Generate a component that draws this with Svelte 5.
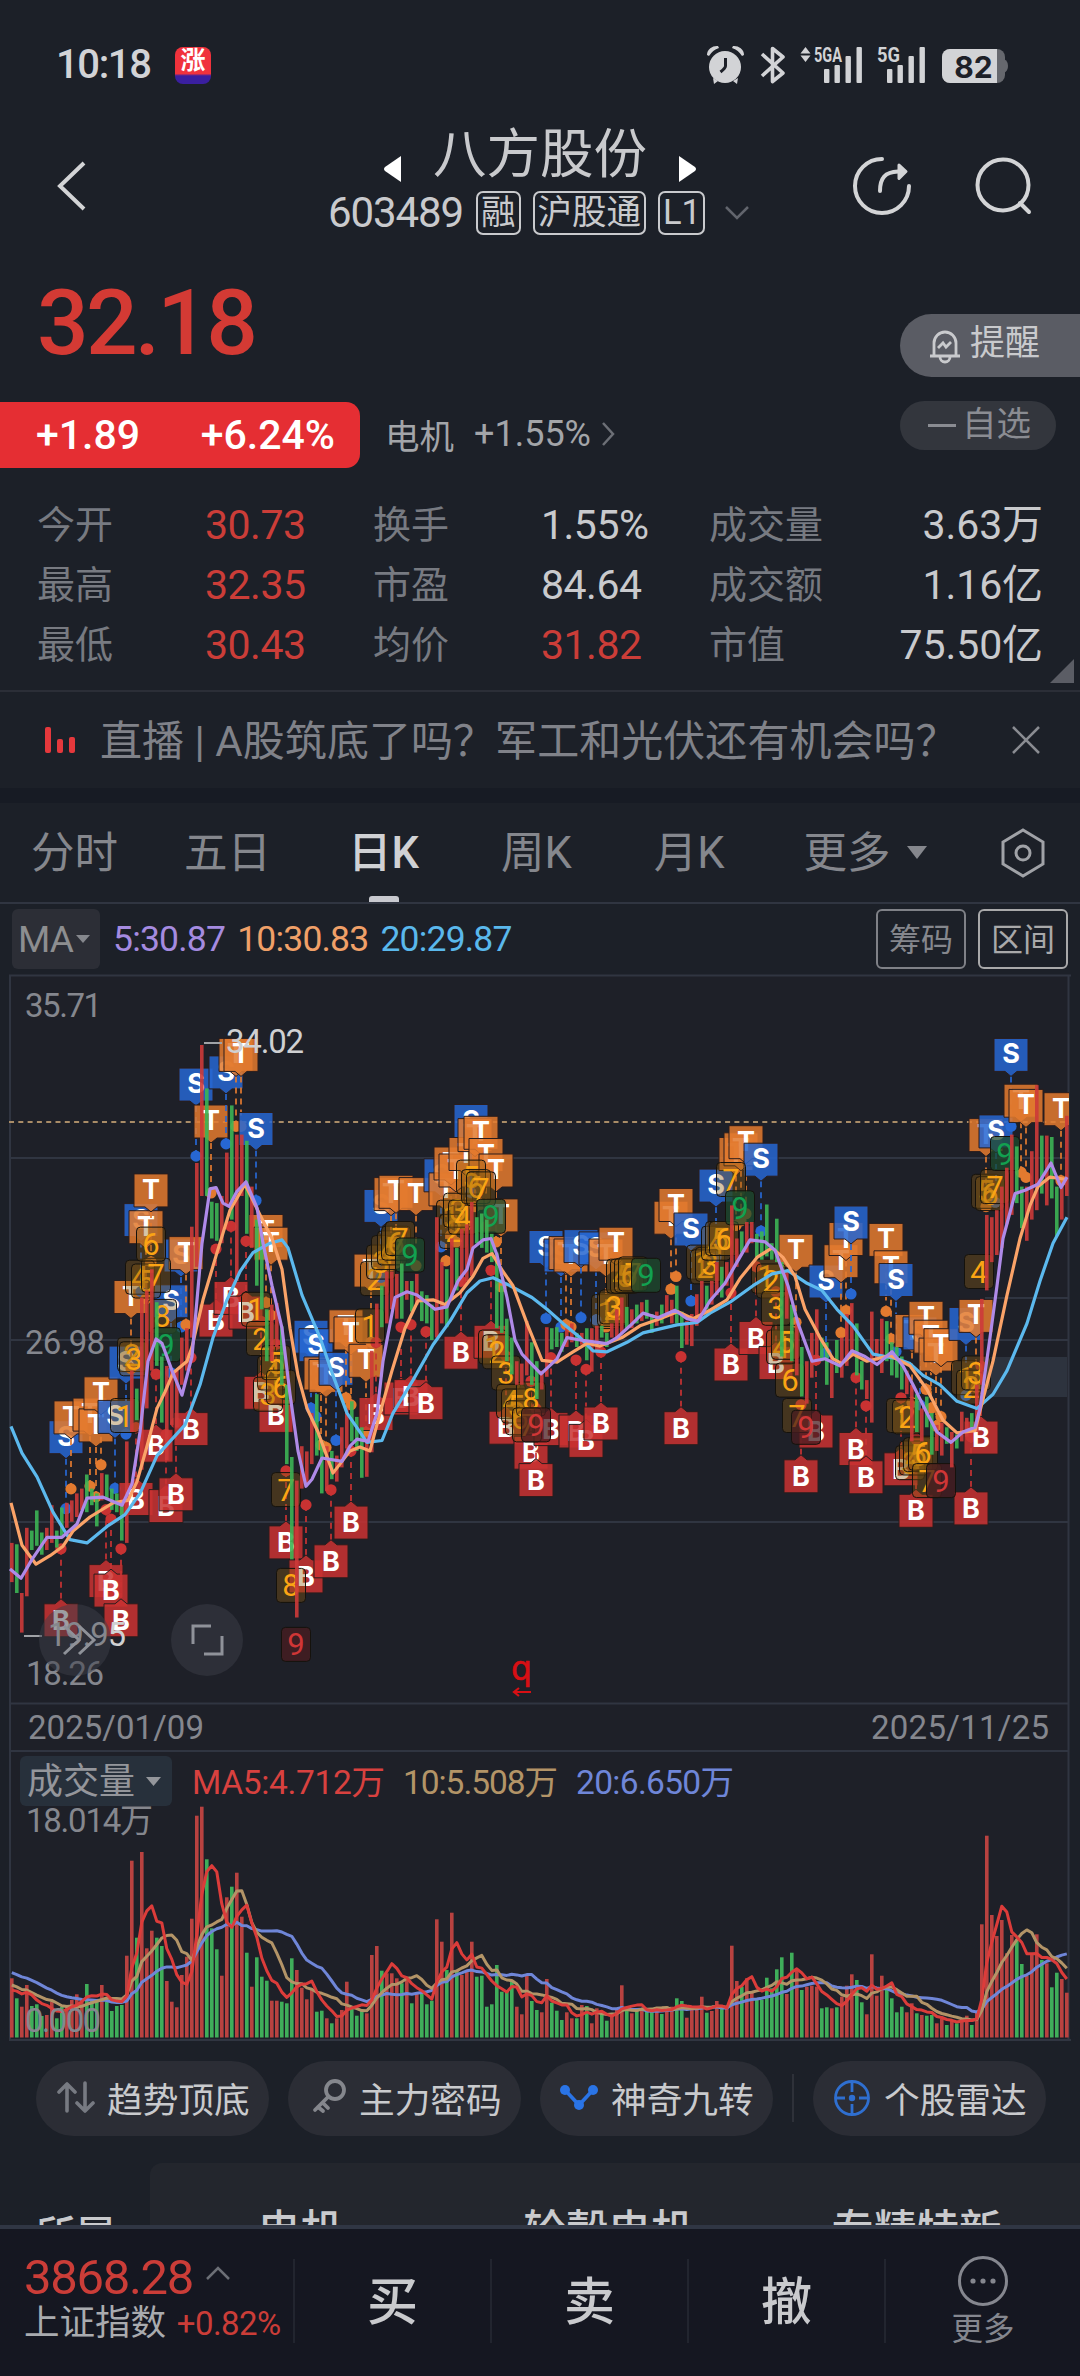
<script lang="ts">
const stats = [
  { label: '今开', value: '30.73', up: true },
  { label: '换手', value: '1.55%', up: false },
  { label: '成交量', value: '3.63万', up: false },
  { label: '最高', value: '32.35', up: true },
  { label: '市盈', value: '84.64', up: false },
  { label: '成交额', value: '1.16亿', up: false },
  { label: '最低', value: '30.43', up: true },
  { label: '均价', value: '31.82', up: true },
  { label: '市值', value: '75.50亿', up: false }
];

const tabs = ['分时', '五日', '日K', '周K', '月K', '更多'];
let active = '日K';

// r = up day, g = down day, then high,low on the price scale
const rawCandles = `r1235,1318 g1238,1341 r1341,1425 r1203,1348 g1209,1250 g1166,1241 g1213,1260 r1203,1250 r1155,1235 g1209,1245
g1160,1220 r1150,1203 r1145,1190 r1130,1180 r1120,1165 g1090,1170 g1120,1155 g1130,1200 r1087,1145 g1090,1140
g1120,1165 g1130,1170 g1150,1230 r1020,1235 r870,1000 g908,975 r715,1080 r700,950 r655,870 g725,860
g840,980 r860,1060 r870,985 r870,990 r800,900 r780,870 r565,800 r430,650 r180,500 g272,500
g512,590 g515,595 r500,600 r408,520 g308,550 r370,680 r370,500 g383,580 r480,610 g550,690
g580,740 g740,850 r730,850 r727,820 g776,900 g900,1068 g1053,1270 r1103,1393 r1030,1120 r1041,1110
r960,1068 g920,1050 g1020,1130 r1030,1125 g1040,1100 r1050,1105 r990,1075 r950,1035 g935,1020 g968,1040
g990,1097 r1010,1095 r828,1043 r728,820 g690,778 r660,770 r660,740 r665,760 g643,760 r680,720
g680,745 r665,730 g702,765 g710,770 g730,805 r545,800 r640,770 g655,778 r590,720 g610,700
r570,690 r560,680 r513,670 g545,600 g537,610 g550,620 g580,640 g620,780 g690,790 g760,850
g800,878 r850,900 r855,900 r765,880 g810,900 g850,930 r870,910 r778,883 g780,825 g778,820
g790,830 r780,820 r770,810 g790,820 r790,815 g780,848 r780,872 r775,830 g775,800 g790,820
r770,800 r740,800 r715,790 g735,780 r740,780 g730,770 r725,765 g720,760 g750,790 r745,775
g730,770 r710,750 r720,770 g690,770 g745,822 r765,815 r750,818 r708,775 r680,750 g690,740
r680,730 r640,710 g650,715 r640,690 r520,700 r590,650 g575,620 r555,620 r555,600 g580,630
g575,635 g518,628 g600,635 g548,640 g640,840 r660,760 g730,850 r770,880 g820,925 r850,940
r790,885 r740,850 g800,850 g810,900 r840,928 g805,875 r800,885 r750,860 r727,840 g770,880
g850,910 r890,930 r745,980 r803,850 r760,875 g765,850 g810,880 g820,885 g840,910 r870,920
r900,1020 g920,1000 r950,1020 g925,990 g960,1048 r985,1040 r980,1050 g990,1025 r1000,1075 g1005,1035
r957,1020 r970,1010 g960,1000 r900,1000 r718,900 r540,700 r545,640 r530,625 r480,610 r440,560
r370,540 g395,515 g480,568 r480,595 r405,550 r265,530 g372,495 r372,520 g375,505 g480,585
r475,550 r330,500`;

const y = (v: number) => +(960 + v * 0.472).toFixed(1);
const bx = (i: number) => +(11.8 + i * 5).toFixed(1);

const candles = rawCandles.split(/\s+/).map((c, i) => {
  const [hi, lo] = c.slice(1).split(',').map(Number);
  return { x: bx(i), up: c[0] === 'r', top: y(hi), bottom: y(lo) };
});

const volumes = [
  865,925,950,885,948,943,978,975,935,985,950,950,930,913,930,882,930,935,885,935,963,948,945,797,512,743,486,775,722,743,
  768,873,935,952,855,800,686,377,350,508,715,778,857,622,590,548,680,788,890,802,860,872,932,932,935,940,805,840,893,928,
  900,965,962,985,1000,985,960,875,950,977,960,970,795,768,842,850,850,865,880,870,940,910,910,943,932,688,755,840,668,840,
  855,845,755,860,857,950,943,825,905,905,870,950,973,858,933,960,967,867,938,962,990,967,985,985,945,948,1000,955,970,992,
  975,960,886,950,970,960,955,960,965,955,972,950,950,925,933,983,960,955,920,968,963,933,955,950,767,873,890,865,905,925,
  930,863,895,838,802,912,788,842,900,890,887,890,955,952,955,952,920,887,853,870,937,973,793,917,857,900,925,967,950,967,
  940,970,975,977,975,1000,985,1005,990,1000,985,977,1005,965,703,437,675,738,690,790,735,750,822,858,790,733,810,820,892,848,
  867,908
];
const volY = (v: number) => +(1690 + v / 3).toFixed(1);

// bars before the first visible day, needed by the long averages
const earlier = [...Array(10).fill(811), ...Array(5).fill(870), ...Array(4).fill(909)];
function volumeMa(n: number) {
  const all = [...earlier, ...volumes];
  return volumes.map((_, i) => {
    const end = i + earlier.length + 1;
    const sum = all.slice(end - n, end).reduce((a, b) => a + b, 0);
    return `${bx(i)},${volY(sum / n)}`;
  }).join(' ');
}

const line = (s: string) => s.split(' ').map((p) => {
  const [x, v] = p.split(',').map(Number);
  return `${x},${y(v)}`;
}).join(' ');

const ma5 = line('10,1290 21,1310 32,1270 47,1223 62,1223 77,1195 87,1140 103,1138 122,1155 132,1110 140,1000 148,850 156,803 162,812 172,870 182,922 192,840 202,600 210,485 216,482 223,515 229,522 237,490 246,470 257,525 263,600 272,690 282,780 290,920 298,1040 306,1115 312,1100 322,1055 342,1062 350,1030 357,1015 368,1020 377,960 383,850 395,715 407,703 417,710 435,740 447,735 458,680 467,655 473,610 483,593 491,590 497,625 507,715 515,805 522,835 541,877 557,845 567,800 580,805 590,808 607,813 617,800 630,775 643,748 658,758 675,742 687,760 698,765 710,722 725,685 737,640 750,593 765,597 775,615 788,690 798,770 812,850 825,845 840,860 852,828 865,840 877,857 892,830 903,860 913,900 927,960 937,1000 951,1022 963,1000 975,990 980,950 990,800 997,690 1003,590 1015,495 1025,488 1038,475 1051,430 1061,482 1067,460');
const ma10 = line('11,1150 22,1240 36,1280 50,1262 63,1242 73,1210 90,1180 113,1150 128,1145 137,1105 147,1030 157,950 165,915 173,875 187,850 192,820 203,720 217,620 230,530 245,475 260,540 272,590 282,655 290,780 298,880 307,950 318,1000 333,1087 350,1040 360,1032 370,1040 380,960 392,870 405,780 418,722 433,720 445,730 460,705 473,670 483,632 492,622 503,660 513,690 527,770 542,848 557,852 573,830 587,812 600,818 622,800 640,775 660,760 678,745 693,760 710,742 727,720 740,675 757,630 772,610 783,630 795,670 805,740 820,800 833,845 842,855 853,835 867,850 890,838 910,860 927,910 943,975 957,1002 975,997 983,930 993,850 1007,710 1020,590 1030,520 1038,480 1050,460 1067,465');
const ma20 = line('11,988 22,1045 37,1095 53,1170 70,1228 87,1235 107,1200 125,1175 140,1130 157,1050 185,985 200,900 213,800 227,720 240,660 253,620 270,600 282,593 288,610 302,710 320,800 333,880 347,960 367,1022 382,1018 393,960 413,890 433,815 450,765 467,705 480,680 493,673 508,688 532,715 547,740 563,770 580,800 593,828 607,830 627,810 643,790 677,773 697,768 710,748 730,725 753,690 772,665 788,658 807,685 822,700 837,740 853,775 873,835 897,845 910,855 923,880 940,900 957,935 977,950 993,920 1007,870 1027,770 1040,680 1053,600 1067,545');

// kind, x, badge centre
const rawSignals = `S66,1010 T71,968 T90,962 T96,985 T101,917 S115,967 S126,852 T131,713 S141,550 T146,565 T151,487 S171,722 S181,625 T186,620
S196,263 T211,341 S226,237 T236,200 T241,200 S256,357 T266,573 T271,600 B61,1400 B106,1317 B111,1337 B121,1400 B136,1143 B156,1030
B166,1158 B176,1133 B191,995 B216,765 B231,717 B246,748 B261,918 B276,967 B286,1235 B306,1307 B331,1275 B351,1193
S311,797 S316,815 T321,875 T326,880 S336,865 T346,775 T351,790 T366,848 T371,657 B376,963 B401,930 B411,925 B426,940 B461,833 B491,810
B506,992 B531,1045 B536,1103 B551,995 B576,1000 B586,1020 B601,983 B681,993 S381,520 T391,495 T396,490 T416,495
S441,455 T446,485 T451,430 T456,445 T466,410 S471,340 T475,370 T481,365 T486,412 T496,445 T501,540
S546,607 S561,625 T566,620 T571,625 S581,605 S596,610 T606,625 T616,600 T671,545 T676,518 S691,570 S716,477
T736,410 T741,400 T746,385 S761,422 T796,615 S826,680 T841,637 T846,590 S851,555 T886,592 T891,650 S896,677
T912,785 S920,790 T926,757 T931,797 T936,835 T941,815 S966,770 T976,753 T986,370 S996,362 S1011,200 T1021,297 T1026,308 T1061,315
B731,858 B756,802 B776,855 B816,1000 B801,1095 B856,1037 B866,1097 B901,1080 B916,1168 B971,1163 B981,1013`;
const signals = rawSignals.split(/\s+/).map((s) => {
  const [x, v] = s.slice(1).split(',').map(Number);
  return { kind: s[0], x, y: y(v), dir: s[0] === 'B' ? -1 : 1 };
});

// nine-turn counter: digit, x, centre; G/R is the closing nine
const rawTurns = `2@132,836 3@134,845 1@125,965 4@140,672 5@146,680 7@156,668 6@151,602 8@162,755 G@166,815
1@256,740 2@261,802 4@272,875 3@268,920 5@276,853 6@281,905 7@286,1122 8@291,1325 R@296,1450
1@370,775 2@375,675 3@381,640 4@386,620 5@392,610 6@396,600 7@400,590 G@410,625
1@451,545 2@454,575 3@458,530 4@463,545 5@471,460 6@476,480 7@481,485 G@491,543
1@493,820 2@497,830 3@506,875 4@511,935 5@516,945 6@520,970 8@531,930 7@527,985 R@536,985
1@606,745 2@612,740 3@614,735 4@621,670 5@625,670 6@629,668 7@633,665 G@646,668
1@701,640 2@705,650 3@710,645 4@716,600 5@720,590 6@724,590 7@731,465 G@740,525
1@766,670 2@771,680 3@776,738 4@781,820 5@786,810 6@790,890 7@797,965 R@806,990
1@901,965 2@907,968 3@910,1065 4@914,1055 5@918,1048 6@923,1045 7@927,1103 R@941,1103
1@966,885 2@971,905 3@976,875 4@979,660 5@986,490 6@990,495 7@995,480 G@1005,410`;
const turns = rawTurns.split(/\s+/).map((s) => {
  const [x, v] = s.slice(2).split(',').map(Number);
  const c = s[0];
  return { text: c === 'G' || c === 'R' ? '9' : c, cls: c === 'G' ? 'sell' : c === 'R' ? 'buy' : 'count', x, y: y(v) };
});
</script>

<div class="app">
  <div class="status">
    <span class="clock">10:18</span>
    <span class="app-icon"><b>涨</b></span>
    <svg class="status-icons" width="302" height="40" viewBox="706 44 302 40">
      <g fill="#d2d3d6">
        <circle cx="725" cy="66" r="16" />
        <path d="M707 54a10 9 0 0 1 11-9l1 2a19 19 0 0 0-10 8zM744 54a10 9 0 0 0-11-9l-1 2a19 19 0 0 1 10 8zM713 77l5 3-4 3zM738 77l-5 3 4 3z" />
        <path d="M805.500 46l5 6.500h-10zM805.500 61l5-6.500h-10z" />
        <rect x="824" y="68" width="5.400" height="14" rx="1" /><rect x="834.500" y="64" width="5.400" height="18" rx="1" />
        <rect x="845.500" y="55" width="5.400" height="27" rx="1" /><rect x="856.500" y="46" width="5.400" height="36" rx="1" />
        <rect x="887" y="68" width="5.400" height="14" rx="1" /><rect x="897.500" y="64" width="5.400" height="18" rx="1" />
        <rect x="908.500" y="55" width="5.400" height="27" rx="1" /><rect x="919.500" y="46" width="5.400" height="36" rx="1" />
        <rect x="942" y="48" width="63" height="34" rx="8" fill="#66686e" />
        <path d="M1004 58q4 2 4 7t-4 7z" fill="#66686e" />
        <path d="M950 48h47v34h-47a8 8 0 0 1-8-8v-18a8 8 0 0 1 8-8z" />
        <text x="814" y="61" font-size="21" font-weight="700" textLength="28" lengthAdjust="spacingAndGlyphs">5GA</text>
        <text x="877" y="61" font-size="21" font-weight="700" textLength="23" lengthAdjust="spacingAndGlyphs">5G</text>
      </g>
      <text x="973.500" y="76.500" class="batt">82</text>
      <path d="M725.500 57v8q0 2-5 6" fill="none" stroke="#1d2028" stroke-width="3" />
      <path d="M762 53l21 19-10.500 8.500v-33l10.500 8.500-21 19" fill="none" stroke="#d2d3d6" stroke-width="3.600" stroke-linejoin="round" />
    </svg>
  </div>

  <div class="nav">
    <svg class="back" width="30" height="50" viewBox="0 0 30 50"><path d="M27 2L3 25l24 23" /></svg>
    <div class="title">
      <div class="name">
        <svg width="19" height="28" viewBox="0 0 19 28"><path d="M18 1v26L2 16q-2-2 0-4z" /></svg>
        <h1>八方股份</h1>
        <svg width="19" height="28" viewBox="0 0 19 28"><path d="M1 1v26l16-11q2-2 0-4z" /></svg>
      </div>
      <div class="code">
        <span class="num">603489</span>
        <span class="tag">融</span>
        <span class="tag">沪股通</span>
        <span class="tag">L1</span>
        <svg width="26" height="14" viewBox="0 0 26 14"><path d="M2 1l11 11L24 1" /></svg>
      </div>
    </div>
    <svg class="share" width="60" height="62" viewBox="0 0 60 62">
      <path d="M30 3a27 27 0 1 0 27 27" />
      <path d="M28 35c0-13 5-19 18-19.500" />
      <path class="solid" d="M47 9l7 6.500-7 7z" />
    </svg>
    <svg class="search" width="60" height="62" viewBox="0 0 60 62"><circle cx="29" cy="29" r="25.500" /><path d="M46 47l9 9" /></svg>
  </div>

  <section class="quote">
    <div class="top">
      <span class="price">32.18</span>
      <button class="remind">
        <svg width="34" height="36" viewBox="0 0 34 36"><path d="M6 28V15a11 11 0 0 1 22 0v13M2 28h30M12 29a5 5 0 0 0 10 0M10 20l5-5 3 4 5-5" /></svg>
        <span>提醒</span>
      </button>
    </div>
    <div class="change">
      <span class="badge"><span>+1.89</span><span>+6.24%</span></span>
      <span class="sector">电机 <em>+1.55%</em>
        <svg width="16" height="26" viewBox="0 0 16 26"><path d="M2 2l10 11L2 24" /></svg>
      </span>
      <button class="watch"><i></i><span>自选</span></button>
    </div>
    <div class="stats">
      {#each stats as s}
        <span class="label">{s.label}</span>
        <span class="value" class:up={s.up}>{s.value}</span>
      {/each}
    </div>
    <span class="corner"></span>
  </section>

  <div class="banner">
    <span class="live"><i></i><i></i><i></i></span>
    <span class="msg">直播 | A股筑底了吗？军工和光伏还有机会吗？</span>
    <svg width="30" height="30" viewBox="0 0 30 30"><path d="M2 2l26 26M28 2L2 28" /></svg>
  </div>

  <nav class="tabs">
    {#each tabs as t}
      <button class:active={t === active} on:click={() => (active = t)}>{t}</button>
    {/each}
    <i class="caret"></i>
    <svg width="46" height="50" viewBox="0 0 46 50"><path d="M23 2l20 12v22L23 48 3 36V14z" /><circle cx="23" cy="25" r="7" /></svg>
  </nav>

  <div class="ma-row">
    <span class="ma-select">MA<i class="caret"></i></span>
    <span class="m5">5:30.87</span>
    <span class="m10">10:30.83</span>
    <span class="m20">20:29.87</span>
    <button class="first">筹码</button>
    <button class="on">区间</button>
  </div>

  <svg class="chart" width="1080" height="1068" viewBox="0 974 1080 1068">
    <defs>
      <clipPath id="plot"><rect x="9" y="975" width="1060" height="1066" /></clipPath>
    </defs>
    <rect x="10" y="976" width="1058" height="1064" fill="#1e2028" />
    <rect x="983" y="1357" width="84" height="40" fill="#2d333e" />
    <g class="grid">
      <path d="M10 1158H1068M10 1340H1068M10 1522H1068M10 1703.500H1068M985 1298H1068" />
      <path d="M9 975.500H1071M10 1751H1068M10 976V2040M1068.500 976V2040" stroke-width="2.400" />
      <path d="M9 2040H1071" stroke-width="4" />
    </g>
    <path class="last" d="M9 1122H1068" />
    <g class="axis">
      <text x="25" y="1017" textLength="77">35.71</text>
      <text x="25" y="1354" textLength="80">26.98</text>
      <text x="26" y="1685" textLength="78">18.26</text>
    </g>

    <g clip-path="url(#plot)">
      {#each signals as s}
        <g class="sig {s.kind}">
          <path class="stalk" d="M{s.x} {s.y + s.dir * 22}V{s.y + s.dir * 70}" />
          <circle cx={s.x} cy={s.y + s.dir * 72} r="5.600" />
          <path class="box" d="M{s.x - 17} {s.y - s.dir * 16}h34v{s.dir * 33}h-11l-6 {s.dir * 5}l-6 {s.dir * -5}h-11z" />
          <text x={s.x} y={s.y + 9}>{s.kind}</text>
        </g>
      {/each}
      {#each turns as t}
        <g class="turn {t.cls}">
          <rect x={t.x - 14.5} y={t.y - 17} width="29" height="34" rx="4" />
          <text x={t.x} y={t.y + 11}>{t.text}</text>
        </g>
      {/each}
      {#each candles as c}
        <path class={c.up ? 'rise' : 'fall'} d="M{c.x} {c.top}V{c.bottom}" />
      {/each}
      <polyline class="ma" stroke="#5cb9ee" points={ma20} />
      <polyline class="ma" stroke="#fba368" points={ma10} />
      <polyline class="ma" stroke="#af8ae8" points={ma5} />
    </g>

    <path d="M204 1043h18M24 1636h18" stroke="#a0a2a6" stroke-width="2" />
    <g class="axis extreme">
      <text x="226" y="1053" textLength="78">34.02</text>
      <text x="48" y="1646" textLength="78">19.95</text>
    </g>

    <circle cx="75" cy="1640" r="36" class="fab" />
    <circle cx="207" cy="1640" r="36" class="fab" />
    <path class="fab-icon" d="M64 1626l15 14-15 14M79 1626l15 14-15 14M193 1644v-18h18M204 1654h18v-18" />
    <text x="521.500" y="1680" class="q">q</text>
    <path d="M531 1692h-17m5-4l-5 4 5 4" fill="none" stroke="#d80f14" stroke-width="2.200" />

    <g class="date">
      <text x="28" y="1739" textLength="176">2025/01/09</text>
      <text x="871" y="1739" textLength="178">2025/11/25</text>
    </g>

    {#each volumes as v, i}
      <path class={candles[i].up ? 'vrise' : 'vfall'} d="M{bx(i)} {volY(v)}V2037.500" />
    {/each}
    <polyline class="vma" stroke="#6f86d8" points={volumeMa(20)} />
    <polyline class="vma" stroke="#b39467" points={volumeMa(10)} />
    <polyline class="vma" stroke="#dc3c3a" points={volumeMa(5)} />

    <rect x="20" y="1756" width="152" height="50" rx="6" fill="#27303b" />
    <text x="27" y="1794" font-size="36" fill="#94969b">成交量</text>
    <path d="M146 1777h15l-7.500 9z" fill="#94969b" />
    <g class="vol-legend">
      <text x="192" y="1794" textLength="193" fill="#d8413f">MA5:4.712万</text>
      <text x="403" y="1794" textLength="155" fill="#b39467">10:5.508万</text>
      <text x="576" y="1794" textLength="158" fill="#6f86d8">20:6.650万</text>
    </g>
    <g class="axis">
      <text x="26" y="1832" textLength="127">18.014万</text>
      <text x="25" y="2032" textLength="76">0.000</text>
    </g>
  </svg>

  <div class="tools">
    <button>
      <svg width="40" height="40" viewBox="0 0 40 40"><g stroke="#777a82" stroke-width="3.600" stroke-linecap="round" stroke-linejoin="round"><path d="M12 33V6M4 14l8-8 8 8M30 5v27M22 25l8 8 8-8" /></g></svg>
      趋势顶底
    </button>
    <button>
      <svg width="40" height="40" viewBox="0 0 40 40"><g stroke="#85878d" stroke-width="3.800" stroke-linecap="round"><circle cx="28" cy="12" r="9" /><path d="M21 19L8 32M16 25l5 5M11 29l5 4" /></g></svg>
      主力密码
    </button>
    <button>
      <svg width="40" height="40" viewBox="0 0 40 40"><g stroke="#2a74e6" stroke-width="3.600"><path d="M6 12l14 15 14-15" /></g><g fill="#2a74e6"><circle cx="6" cy="12" r="5" /><circle cx="20" cy="27" r="5" /><circle cx="34" cy="12" r="5" /></g></svg>
      神奇九转
    </button>
    <i class="sep"></i>
    <button>
      <svg width="40" height="40" viewBox="0 0 40 40"><g stroke="#2f6fd0" stroke-width="2.800"><circle cx="20" cy="20" r="16.500" /><path d="M20 3v11M20 26v11M3 20h10M27 20h10" /></g><circle cx="20" cy="20" r="3.200" fill="#2f6fd0" /></svg>
      个股雷达
    </button>
  </div>

  <div class="belong">
    <span class="own">所属</span>
    <div class="list"><span>电机</span><span>轮毂电机</span><span>专精特新</span></div>
  </div>

  <footer>
    <div class="index">
      <div class="point">3868.28 <svg width="26" height="16" viewBox="0 0 26 16"><path d="M2 14L13 3l11 11" /></svg></div>
      <div class="idx">上证指数 <em>+0.82%</em></div>
    </div>
    <button>买</button>
    <button>卖</button>
    <button>撤</button>
    <div class="more">
      <svg width="52" height="52" viewBox="0 0 52 52"><circle cx="26" cy="26" r="23.500" /><g class="dots"><circle cx="16" cy="26" r="2.600" /><circle cx="26" cy="26" r="2.600" /><circle cx="36" cy="26" r="2.600" /></g></svg>
      更多
    </div>
  </footer>
</div>

<style>
:global(body) {
  background: #1d2028;
}
.app {
  width: 1080px;
  height: 2376px;
  overflow: hidden;
  display: flex;
  flex-direction: column;
  background: #1c2028;
  color: #c9cacd;
  font-family: Roboto, "Noto Sans CJK SC", sans-serif;
}
.app > * {
  flex: none;
  box-sizing: border-box;
}
button {
  padding: 0;
  border: 0;
  background: none;
  color: inherit;
  font: inherit;
}
i, em {
  font-style: normal;
}
svg {
  display: block;
  fill: none;
}
.caret {
  width: 0;
  border: 10px solid transparent;
  border-top: 13px solid #85878d;
  border-bottom: 0;
}

.status {
  height: 125px;
  display: flex;
  align-items: center;
  padding: 4px 72px 0 56px;
}
.clock {
  width: 94px;
  font-size: 40px;
  font-weight: 500;
  letter-spacing: -1.4px;
  color: #d2d3d6;
}
.app-icon {
  width: 36px;
  height: 37px;
  margin: 2px auto 0 25px;
  border-radius: 8px;
  background: linear-gradient(#f0323c 72%, #3a1fa0 78%);
  text-align: center;
  color: #fff;
  font-size: 25px;
  line-height: 28px;
}
.batt {
  font-family: Inter, sans-serif;
  font-size: 30px;
  font-weight: 700;
  text-anchor: middle;
  fill: #1d2028;
}

.nav {
  height: 135px;
  display: flex;
  align-items: flex-start;
}
.nav svg {
  stroke: #d3d4d6;
  stroke-width: 4;
}
.back {
  margin: 36px 0 0 57px;
}
.title {
  flex: 1;
  margin-left: 241px;
}
.name {
  display: flex;
  align-items: center;
  gap: 31px;
  height: 58px;
  margin-left: 55px;
}
.name .name, .name svg {
  fill: #fff;
  stroke: none;
  margin-top: 30px;
}
h1 {
  margin: 2px 0 0;
  font-size: 53.5px;
  font-weight: 400;
  line-height: 58px;
  white-space: nowrap;
}
.code {
  display: flex;
  align-items: center;
  margin-top: 8px;
  white-space: nowrap;
}
.num {
  width: 148px;
  font-size: 42px;
  line-height: 44px;
  letter-spacing: -1.1px;
}
.tag {
  box-sizing: border-box;
  height: 44px;
  margin-right: 12px;
  padding: 0 3px;
  border: 2.5px solid #c9cacd;
  border-radius: 7px;
  font-size: 34.5px;
  line-height: 38px;
}
.tag:nth-child(4) {
  padding: 0 2px 0 3px;
}
.code svg {
  margin-left: 7px;
  stroke: #62656d;
  stroke-width: 2.5;
}
.share {
  margin: 31px 62px 0 0;
  stroke-linecap: round;
}
.share .solid {
  fill: #d3d4d6;
  stroke-width: 3;
  stroke-linejoin: round;
}
.search {
  margin: 31px 46px 0 0;
  stroke-linecap: round;
}

.quote {
  position: relative;
  height: 432px;
  border-bottom: 2px solid #2b2e37;
}
.top {
  height: 142px;
  display: flex;
  justify-content: space-between;
  padding-left: 37px;
}
.price {
  font-size: 91px;
  line-height: 127px;
  letter-spacing: -2.8px;
  font-weight: 500;
  color: #d43a34;
}
.remind {
  display: flex;
  align-items: center;
  gap: 8px;
  box-sizing: border-box;
  width: 180px;
  height: 63px;
  margin-top: 54px;
  padding-left: 28px;
  border-radius: 32px 0 0 32px;
  background: #5a5c64;
  font-size: 35px;
  line-height: 40px;
}
.remind span, .watch span {
  margin-top: -4px;
}
.remind svg {
  stroke: #c9cacd;
  stroke-width: 2.8;
}
.change {
  display: flex;
  height: 66px;
}
.badge {
  box-sizing: border-box;
  width: 360px;
  padding: 0 25px 0 36px;
  display: flex;
  justify-content: space-between;
  border-radius: 0 14px 14px 0;
  background: #e52e33;
  color: #fff;
  font-size: 41px;
  font-weight: 500;
  line-height: 66px;
  letter-spacing: 0;
}
.sector {
  display: flex;
  align-items: center;
  height: 64px;
  margin-left: 25px;
  font-size: 34.5px;
  color: #a3a5a9;
}
.sector em {
  margin: 0 10px 0 20px;
  font-size: 36px;
}
.sector svg {
  stroke: #6c6f76;
  stroke-width: 2.5;
}
.watch {
  display: flex;
  align-items: center;
  box-sizing: border-box;
  width: 156px;
  height: 49px;
  margin: -1px 24px 0 auto;
  padding-left: 28px;
  border-radius: 25px;
  background: #33363d;
  color: #8a8c92;
  font-size: 34.5px;
  line-height: 40px;
}
.watch i {
  width: 28px;
  height: 3px;
  margin-right: 6px;
  background: #8a8c92;
}
.stats {
  display: grid;
  grid-template-columns: 168px 168px 168px 168px 168px 166px;
  grid-auto-rows: 60px;
  margin: 27px 0 0 37px;
  line-height: 60px;
  white-space: nowrap;
}
.label {
  font-size: 38px;
  color: #777a81;
}
.value {
  font-size: 41px;
  letter-spacing: -0.5px;
}
.value:nth-child(6n) {
  text-align: right;
  letter-spacing: -0.1px;
}
.up {
  color: #cb3d38;
}
.corner {
  position: absolute;
  right: 6px;
  bottom: 7px;
  border: 12px solid transparent;
  border-right-color: #5b5d65;
  border-bottom-color: #5b5d65;
}

.banner {
  height: 111px;
  display: flex;
  align-items: center;
  padding: 0 39px 0 45px;
  border-bottom: 15px solid #171b24;
  color: #808289;
}
.live {
  width: 55px;
  height: 26px;
  display: flex;
  align-items: flex-end;
  gap: 6px;
}
.live i {
  width: 6px;
  height: 14px;
  border-radius: 2px;
  background: #e5383c;
}
.live i:first-child {
  height: 26px;
}
.live i:last-child {
  height: 16px;
}
.msg {
  flex: 1;
  margin-top: -5px;
  font-size: 42px;
  letter-spacing: 0.05px;
  white-space: nowrap;
}
.banner svg {
  stroke: #8a8c92;
  stroke-width: 2.5;
}

.tabs {
  height: 101px;
  display: flex;
  align-items: center;
  padding-left: 31px;
  border-bottom: 2px solid #303541;
  font-size: 43.5px;
  color: #85878d;
}
.tabs button {
  position: relative;
  height: 99px;
  padding-bottom: 6px;
  margin-right: 66px;
}
.tabs button:nth-child(2) {
  margin-right: 77px;
}
.tabs button:nth-child(3), .tabs button:nth-child(4) {
  margin-right: 82px;
}
.tabs button:nth-child(5) {
  margin-right: 79px;
}
.tabs button:nth-child(6) {
  margin-right: 16px;
}
.tabs .active {
  color: #d0d1d4;
  font-weight: 500;
}
.tabs .active::after {
  content: "";
  position: absolute;
  left: 50%;
  bottom: 0;
  width: 30px;
  height: 6px;
  margin-left: -15px;
  border-radius: 3px 3px 0 0;
  background: #c8c9cf;
}
.tabs svg {
  margin: 0 34px 0 auto;
  stroke: #a0a2a7;
  stroke-width: 3;
}

.ma-row {
  height: 70px;
  display: flex;
  align-items: center;
  padding: 0 12px;
  font-size: 35.5px;
  white-space: nowrap;
}
.ma-row span {
  letter-spacing: -0.8px;
  margin-right: 12px;
}
.ma-row .ma-select {
  box-sizing: border-box;
  display: flex;
  align-items: center;
  gap: 3px;
  width: 88px;
  height: 60px;
  padding-left: 6px;
  margin-right: 13px;
  border-radius: 6px;
  background: #2c2e36;
  color: #8d8e90;
  font-size: 37px;
}
.ma-select .caret {
  border-width: 8px 7px 0;
}
.m5 { color: #a58be0; }
.m10 { color: #f0a068; }
.m20 { color: #5ab8ec; }
.ma-row button {
  box-sizing: border-box;
  width: 90px;
  height: 60px;
  padding-bottom: 4px;
  border: 2px solid #7f8187;
  border-radius: 6px;
  font-size: 32px;
  color: #85878d;
}
.ma-row .first {
  margin-left: auto;
  margin-right: 12px;
}
.ma-row .on {
  border-color: #a9a9aa;
  color: #a9a9aa;
}

.grid path {
  stroke: #303541;
  stroke-width: 2;
}
.last {
  stroke: #a98c67;
  stroke-width: 2;
  stroke-dasharray: 5 4.3;
}
.axis text {
  font-size: 33px;
  fill: #85878e;
}
.axis.extreme text {
  fill: #cfd0d2;
}
.date text {
  font-size: 33px;
  fill: #85878e;
}
.vol-legend text {
  font-size: 33.5px;
}
.rise, .fall {
  stroke: #cc3a38;
  stroke-width: 3.6;
  stroke-opacity: 0.9;
}
.fall {
  stroke: #3cb454;
}
.vrise, .vfall {
  stroke: #b94240;
  stroke-width: 3.6;
}
.vfall {
  stroke: #3fae5a;
}
.ma {
  stroke-width: 3.2;
  stroke-linejoin: round;
}
.vma {
  stroke-width: 3;
  stroke-linejoin: round;
}
.sig .box {
  stroke: #2a1d1d;
  stroke-width: 1;
  fill-opacity: 0.86;
}
.sig .stalk {
  stroke-width: 2;
  stroke-dasharray: 6 5;
  stroke-opacity: 0.85;
}
.sig text {
  font-family: Inter, sans-serif;
  font-size: 27px;
  font-weight: 700;
  text-anchor: middle;
  fill: #fff;
}
.T { fill: #e37a2f; stroke: #e37a2f; }
.S { fill: #2767d2; stroke: #2767d2; }
.B { fill: #c93232; stroke: #c93232; }
.sig text, .sig circle {
  stroke: none;
}
.turn rect {
  fill: #8a5c10;
  fill-opacity: 0.36;
  stroke: #15120c;
  stroke-width: 1;
}
.turn text {
  font-size: 31px;
  text-anchor: middle;
  fill: #fba414;
}
.turn.sell rect { fill: #1d4a2c; fill-opacity: 0.75; }
.turn.sell text { fill: #12a150; }
.turn.buy rect { fill: #4a1c20; fill-opacity: 0.75; }
.turn.buy text { fill: #d03636; }
.fab {
  fill: #3b3e47;
  fill-opacity: 0.5;
}
.fab-icon {
  stroke: #8f9299;
  stroke-width: 3;
}
.q {
  font-family: "DejaVu Sans", sans-serif;
  font-size: 33px;
  text-anchor: middle;
  fill: #d80f14;
  stroke: #d80f14;
  stroke-width: 0.6;
}

.tools {
  height: 121px;
  display: flex;
  align-items: flex-start;
  gap: 19px;
  padding: 19px 0 0 36px;
}
.tools button {
  display: flex;
  align-items: center;
  gap: 12px;
  box-sizing: border-box;
  width: 233px;
  height: 75px;
  padding: 0 0 2px 19px;
  border-radius: 38px;
  background: #2b2d35;
  font-size: 35.7px;
  white-space: nowrap;
}
.sep {
  width: 2px;
  height: 48px;
  margin-top: 13px;
  background: #2e3139;
}
.belong {
  height: 62px;
  display: flex;
  overflow: hidden;
  font-size: 42.5px;
  font-weight: 500;
  line-height: 60px;
}
.own {
  width: 150px;
  box-sizing: border-box;
  padding: 43px 0 0 36px;
  font-size: 39.5px;
}
.list {
  flex: 1;
  display: grid;
  grid-template-columns: 308px 308px 308px;
  box-sizing: border-box;
  padding: 38px 0 0;
  border-radius: 12px 0 0 0;
  background: #23262d;
  text-align: center;
}
.list span {
  margin-left: -7px;
}

footer {
  flex: 1 !important;
  display: flex;
  padding-top: 30px;
  border-top: 4px solid #303644;
  background: #151721;
}
.index {
  width: 293px;
  box-sizing: border-box;
  padding-left: 24px;
  white-space: nowrap;
}
.point {
  display: flex;
  gap: 12px;
  margin-top: -4px;
  font-size: 49px;
  font-weight: 400;
  line-height: 46px;
  letter-spacing: -1.3px;
  color: #cb3d38;
}
.point svg {
  margin-top: 10px;
  stroke: #6c6f76;
  stroke-width: 2.5;
}
.idx {
  font-size: 35.5px;
  line-height: 44px;
  color: #a9abaf;
}
.idx em {
  margin-left: 2px;
  font-size: 33px;
  letter-spacing: -0.6px;
  color: #cb3d38;
}
footer button {
  box-sizing: border-box;
  width: 197px;
  height: 84px;
  padding-bottom: 6px;
  border-left: 2px solid #22252f;
  font-size: 51px;
  font-weight: 500;
}
.more {
  flex: 1;
  height: 84px;
  display: flex;
  flex-direction: column;
  align-items: center;
  border-left: 2px solid #22252f;
  font-size: 31.5px;
  line-height: 46px;
  color: #85878f;
}
.more svg {
  flex: none;
  margin-top: -4px;
  stroke: #85878f;
  stroke-width: 3;
}
.dots {
  fill: #85878f;
  stroke: none;
}
</style>
